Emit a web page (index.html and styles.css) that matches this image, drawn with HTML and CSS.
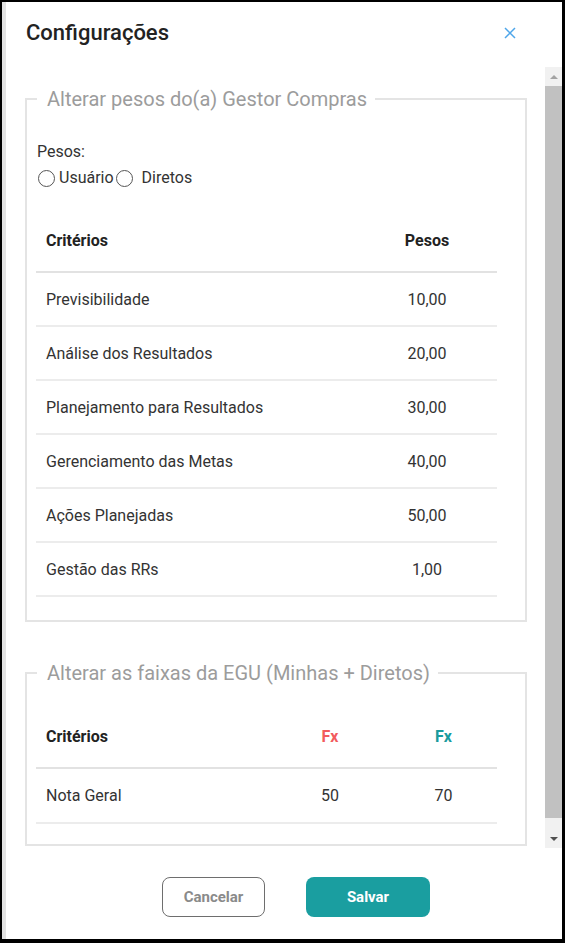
FILE: index.html
```html
<!DOCTYPE html>
<html lang="pt">
<head>
<meta charset="utf-8">
<title>Configurações</title>
<link rel="stylesheet" href="styles.css">
</head>
<body>
<div class="dialog">
  <header class="dialog-header">
    <h1 class="dialog-title">Configurações</h1>
    <button class="close-btn" aria-label="Fechar">
      <svg width="12" height="12" viewBox="0 0 12 12"><path d="M1 1L11 11M11 1L1 11" stroke="#4ea6ea" stroke-width="1.5" fill="none"/></svg>
    </button>
  </header>
  <div class="dialog-body">
    <div class="scroll-content">
      <fieldset class="group group-pesos">
        <legend class="group-legend">Alterar pesos do(a) Gestor Compras</legend>
        <div class="pesos-label">Pesos:</div>
        <div class="radio-row">
          <label class="radio"><span class="radio-circle"></span>Usuário</label>
          <label class="radio"><span class="radio-circle"></span>Diretos</label>
        </div>
        <table class="grid grid-pesos">
          <thead>
            <tr><th class="col-name">Critérios</th><th class="col-val">Pesos</th></tr>
          </thead>
          <tbody>
            <tr><td>Previsibilidade</td><td class="col-val">10,00</td></tr>
            <tr><td>Análise dos Resultados</td><td class="col-val">20,00</td></tr>
            <tr><td>Planejamento para Resultados</td><td class="col-val">30,00</td></tr>
            <tr><td>Gerenciamento das Metas</td><td class="col-val">40,00</td></tr>
            <tr><td>Ações Planejadas</td><td class="col-val">50,00</td></tr>
            <tr><td>Gestão das RRs</td><td class="col-val">1,00</td></tr>
          </tbody>
        </table>
      </fieldset>
      <fieldset class="group group-faixas">
        <legend class="group-legend">Alterar as faixas da EGU (Minhas + Diretos)</legend>
        <table class="grid grid-faixas">
          <thead>
            <tr><th class="col-name">Critérios</th><th class="col-fx fx-red">Fx</th><th class="col-fx fx-teal">Fx</th></tr>
          </thead>
          <tbody>
            <tr><td>Nota Geral</td><td class="col-fx">50</td><td class="col-fx">70</td></tr>
          </tbody>
        </table>
      </fieldset>
    </div>
    <div class="scrollbar">
      <div class="sb-arrow"><span class="tri-up"></span></div>
      <div class="sb-thumb"></div>
      <div class="sb-rest"></div>
      <div class="sb-arrow"><span class="tri-down"></span></div>
    </div>
  </div>
  <footer class="dialog-footer">
    <button class="btn btn-cancel">Cancelar</button>
    <button class="btn btn-save">Salvar</button>
  </footer>
</div>
</body>
</html>
```
FILE: styles.css
```css
* { box-sizing: border-box; }
html, body { margin: 0; padding: 0; }
body {
  background: #000;
  padding: 2px 3px 4px 2px;
  width: 565px;
  height: 943px;
  font-family: Roboto, "Liberation Sans", Arial, sans-serif;
  color: #333;
}
.dialog {
  background: #fff;
  border-left: 4px solid #e2e2e2;
  height: 937px;
  display: flex;
  flex-direction: column;
}
.dialog-header {
  height: 65px;
  display: flex;
  align-items: flex-start;
  justify-content: space-between;
  padding: 18px 46px 0 20px;
}
.dialog-title {
  margin: 0;
  font-size: 22px;
  font-weight: 500;
  color: #222;
  line-height: 26px;
}
.close-btn {
  border: 0;
  background: none;
  padding: 0;
  margin-top: 7px;
  width: 12px;
  height: 12px;
  display: flex;
}
.dialog-body {
  height: 781px;
  display: flex;
  overflow: hidden;
}
.scroll-content {
  flex: 1;
  padding: 20px 18px 0 19px;
}
.group {
  margin: 0;
  border: 2px solid #e4e4e4;
  padding: 0 0 23px 0;
}
.group-legend {
  margin-left: 10px;
  padding: 0 8px 0 10px;
  font-size: 20px;
  line-height: 24px;
  color: #9c9c9c;
}
.group-faixas { margin-top: 39px; padding-bottom: 20px; }
.pesos-label {
  padding-left: 10px;
  margin-top: 31px;
  font-size: 16px;
  line-height: 20px;
  color: #333;
}
.radio-row {
  display: flex;
  padding-left: 11px;
  margin-top: 5px;
  font-size: 16px;
  line-height: 22px;
}
.radio {
  display: flex;
  align-items: center;
  color: #333;
}
.radio-circle {
  width: 17px;
  height: 17px;
  border: 1.5px solid #555;
  border-radius: 50%;
  margin-right: 4px;
}
.radio + .radio .radio-circle { margin-left: 2px; margin-right: 9px; }
.grid {
  margin-left: 9px;
  width: 461px;
  border-collapse: collapse;
  font-size: 16px;
}
.grid-pesos { margin-top: 21px; }
.grid-faixas { margin-top: 21px; }
.grid th {
  font-weight: 700;
  color: #222;
  height: 62px;
  text-align: left;
  padding: 0 0 0 10px;
  border-bottom: 2px solid #e2e2e2;
}
.grid td {
  height: 54px;
  padding: 0 0 0 10px;
  border-bottom: 2px solid #ececec;
  color: #333;
}
.grid-faixas td { height: 55px; }
.grid .col-val { width: 140px; text-align: center; padding: 0; }
.grid .col-fx { text-align: center; padding: 0; }
.grid-faixas .col-fx:nth-child(2) { width: 120px; }
.grid-faixas .col-fx:nth-child(3) { width: 107px; }
.grid th.fx-red { color: #f25b5e; }
.grid th.fx-teal { color: #1a9b9e; }
.scrollbar {
  width: 17px;
  display: flex;
  flex-direction: column;
  background: #f1f1f1;
}
.sb-arrow {
  height: 19px;
  display: flex;
  align-items: center;
  justify-content: center;
}
.tri-up, .tri-down {
  width: 0; height: 0;
  border-left: 4px solid transparent;
  border-right: 4px solid transparent;
}
.tri-up { border-bottom: 4px solid #a3a3a3; }
.tri-down { border-top: 4px solid #505050; }
.sb-thumb { height: 732px; background: #c1c1c1; }
.sb-rest { flex: 1; }
.dialog-footer {
  flex: 1;
  display: flex;
  align-items: flex-start;
  padding: 29px 0 0 156px;
  gap: 41px;
}
.btn {
  height: 40px;
  border-radius: 8px;
  font-family: Roboto, "Liberation Sans", Arial, sans-serif;
  font-size: 15px;
  font-weight: 700;
}
.btn-cancel {
  width: 103px;
  background: #fff;
  border: 1.5px solid #6e6e6e;
  color: #8a8a8a;
}
.btn-save {
  width: 124px;
  background: #1a9ea0;
  border: 0;
  color: #fff;
}
```
